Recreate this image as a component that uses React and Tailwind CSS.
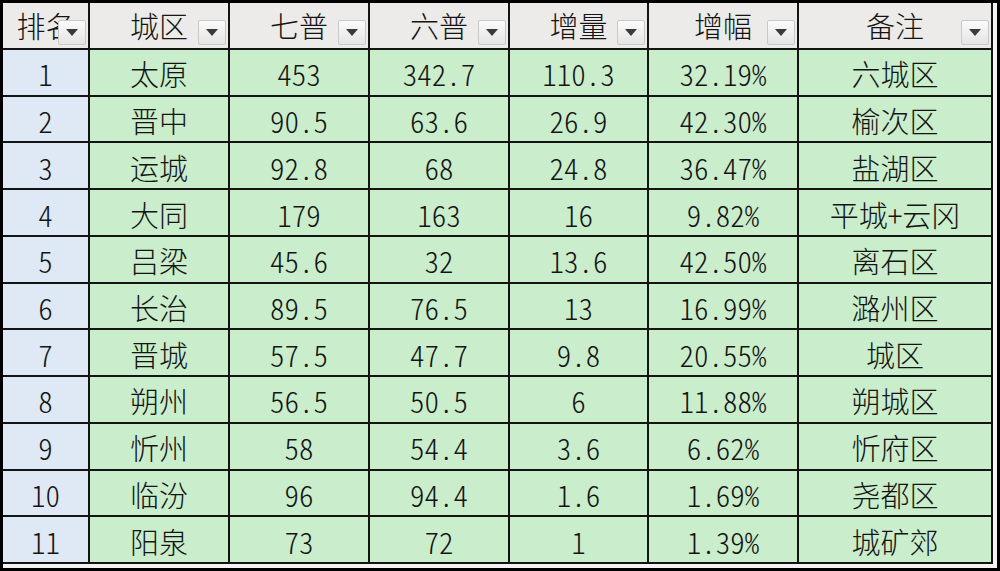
const headers = ["排名", "城区", "七普", "六普", "增量", "增幅", "备注"];

const rows = [
  ["1", "太原", "453", "342.7", "110.3", "32.19%", "六城区"],
  ["2", "晋中", "90.5", "63.6", "26.9", "42.30%", "榆次区"],
  ["3", "运城", "92.8", "68", "24.8", "36.47%", "盐湖区"],
  ["4", "大同", "179", "163", "16", "9.82%", "平城+云冈"],
  ["5", "吕梁", "45.6", "32", "13.6", "42.50%", "离石区"],
  ["6", "长治", "89.5", "76.5", "13", "16.99%", "潞州区"],
  ["7", "晋城", "57.5", "47.7", "9.8", "20.55%", "城区"],
  ["8", "朔州", "56.5", "50.5", "6", "11.88%", "朔城区"],
  ["9", "忻州", "58", "54.4", "3.6", "6.62%", "忻府区"],
  ["10", "临汾", "96", "94.4", "1.6", "1.69%", "尧都区"],
  ["11", "阳泉", "73", "72", "1", "1.39%", "城矿郊"],
];

const FilterButton = () => (
  <div className="absolute right-[2px] bottom-[3px] flex h-[25px] w-[28px] items-center justify-center rounded-[2px] border border-[#c9c9c9] bg-gradient-to-b from-[#fbfbfb] to-[#e4e4e4]">
    <svg width="12" height="7" viewBox="0 0 12 7">
      <path d="M0 0 L12 0 L6 7 Z" fill="#3a3a3a" />
    </svg>
  </div>
);

export default function App() {
  return (
    <div className="h-[571px] w-[1000px] bg-black pt-[3px] pl-[3px] pr-[3px] pb-[3px] font-['Noto_Sans_CJK_SC',sans-serif] text-[29px] font-light leading-none text-[#141414] [font-feature-settings:'hwid']">
      <div className="h-full bg-[#f3f3f3] pr-[4px] pb-[4px]">
        <div className="grid h-full grid-cols-[85px_138px_138px_138px_137px_148px_192px] grid-rows-[45px_repeat(11,1fr)] gap-[2px] border-r-2 border-b-2 border-[#141414] bg-[#141414]">
          {headers.map((h) => (
            <div key={h} className="relative flex items-center justify-center overflow-hidden bg-[#ecebe9]">
              <span className="whitespace-nowrap">{h}</span>
              <FilterButton />
            </div>
          ))}
          {rows.map((row) =>
            row.map((cell, i) => (
              <div
                key={row[0] + "-" + i}
                className={`flex items-center justify-center pt-[3px] whitespace-nowrap ${i === 0 ? "bg-[#dfe8f5]" : "bg-[#caedcc]"}`}
              >
                {cell}
              </div>
            ))
          )}
        </div>
      </div>
    </div>
  );
}
